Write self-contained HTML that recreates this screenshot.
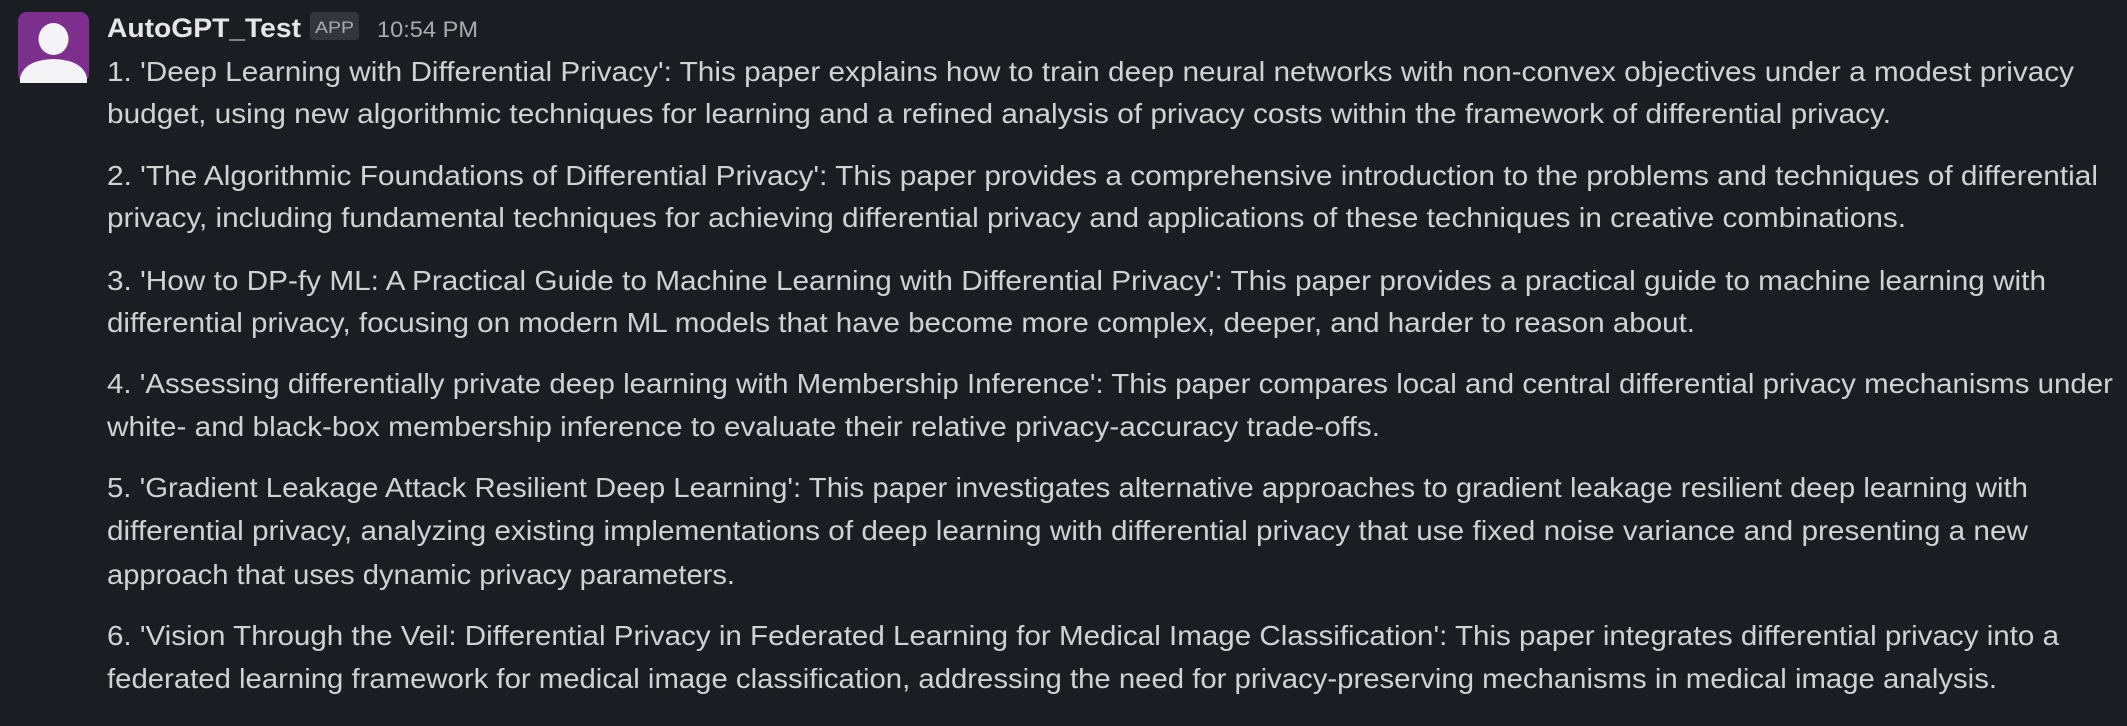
<!DOCTYPE html>
<html><head><meta charset="utf-8"><style>
html,body{margin:0;padding:0;background:#1a1d21;width:2127px;height:726px;overflow:hidden}
svg{display:block}
text{font-family:"Liberation Sans",sans-serif}
.t{font-size:28px;fill:#d1d2d3}
</style></head><body>
<svg width="2127" height="726" viewBox="0 0 2127 726" xmlns="http://www.w3.org/2000/svg">
<rect width="2127" height="726" fill="#1a1d21"/>
<rect x="18" y="12" width="71" height="71" rx="9" fill="#7d2f8e"/>
<ellipse cx="53.5" cy="39" rx="15" ry="16" fill="#f4f3f6"/>
<path d="M20 83 L20 78 Q24 60 53.5 59 Q83 60 87 78 L87 83 Z" fill="#f4f3f6"/>
<text x="107" y="37" font-size="27" font-weight="bold" fill="#e6e6e7" textLength="194" lengthAdjust="spacingAndGlyphs">AutoGPT_Test</text>
<rect x="310" y="12" width="49" height="28" rx="4" fill="#34363b"/>
<text x="315" y="33" font-size="17" fill="#abacae" textLength="39" lengthAdjust="spacingAndGlyphs">APP</text>
<text x="377" y="37" font-size="22" fill="#abacae" textLength="101" lengthAdjust="spacingAndGlyphs">10:54 PM</text>
<g class="t">
<text x="107" y="81" textLength="1967" lengthAdjust="spacingAndGlyphs">1. 'Deep Learning with Differential Privacy': This paper explains how to train deep neural networks with non-convex objectives under a modest privacy</text>
<text x="107" y="123" textLength="1784" lengthAdjust="spacingAndGlyphs">budget, using new algorithmic techniques for learning and a refined analysis of privacy costs within the framework of differential privacy.</text>
<text x="107" y="185" textLength="1991" lengthAdjust="spacingAndGlyphs">2. 'The Algorithmic Foundations of Differential Privacy': This paper provides a comprehensive introduction to the problems and techniques of differential</text>
<text x="107" y="227" textLength="1799" lengthAdjust="spacingAndGlyphs">privacy, including fundamental techniques for achieving differential privacy and applications of these techniques in creative combinations.</text>
<text x="107" y="290" textLength="1939" lengthAdjust="spacingAndGlyphs">3. 'How to DP-fy ML: A Practical Guide to Machine Learning with Differential Privacy': This paper provides a practical guide to machine learning with</text>
<text x="107" y="332" textLength="1588" lengthAdjust="spacingAndGlyphs">differential privacy, focusing on modern ML models that have become more complex, deeper, and harder to reason about.</text>
<text x="107" y="393" textLength="2006" lengthAdjust="spacingAndGlyphs">4. 'Assessing differentially private deep learning with Membership Inference': This paper compares local and central differential privacy mechanisms under</text>
<text x="107" y="436" textLength="1273" lengthAdjust="spacingAndGlyphs">white- and black-box membership inference to evaluate their relative privacy-accuracy trade-offs.</text>
<text x="107" y="497" textLength="1921" lengthAdjust="spacingAndGlyphs">5. 'Gradient Leakage Attack Resilient Deep Learning': This paper investigates alternative approaches to gradient leakage resilient deep learning with</text>
<text x="107" y="540" textLength="1921" lengthAdjust="spacingAndGlyphs">differential privacy, analyzing existing implementations of deep learning with differential privacy that use fixed noise variance and presenting a new</text>
<text x="107" y="584" textLength="628" lengthAdjust="spacingAndGlyphs">approach that uses dynamic privacy parameters.</text>
<text x="107" y="645" textLength="1952" lengthAdjust="spacingAndGlyphs">6. 'Vision Through the Veil: Differential Privacy in Federated Learning for Medical Image Classification': This paper integrates differential privacy into a</text>
<text x="107" y="688" textLength="1890" lengthAdjust="spacingAndGlyphs">federated learning framework for medical image classification, addressing the need for privacy-preserving mechanisms in medical image analysis.</text>
</g>
</svg>
</body></html>
